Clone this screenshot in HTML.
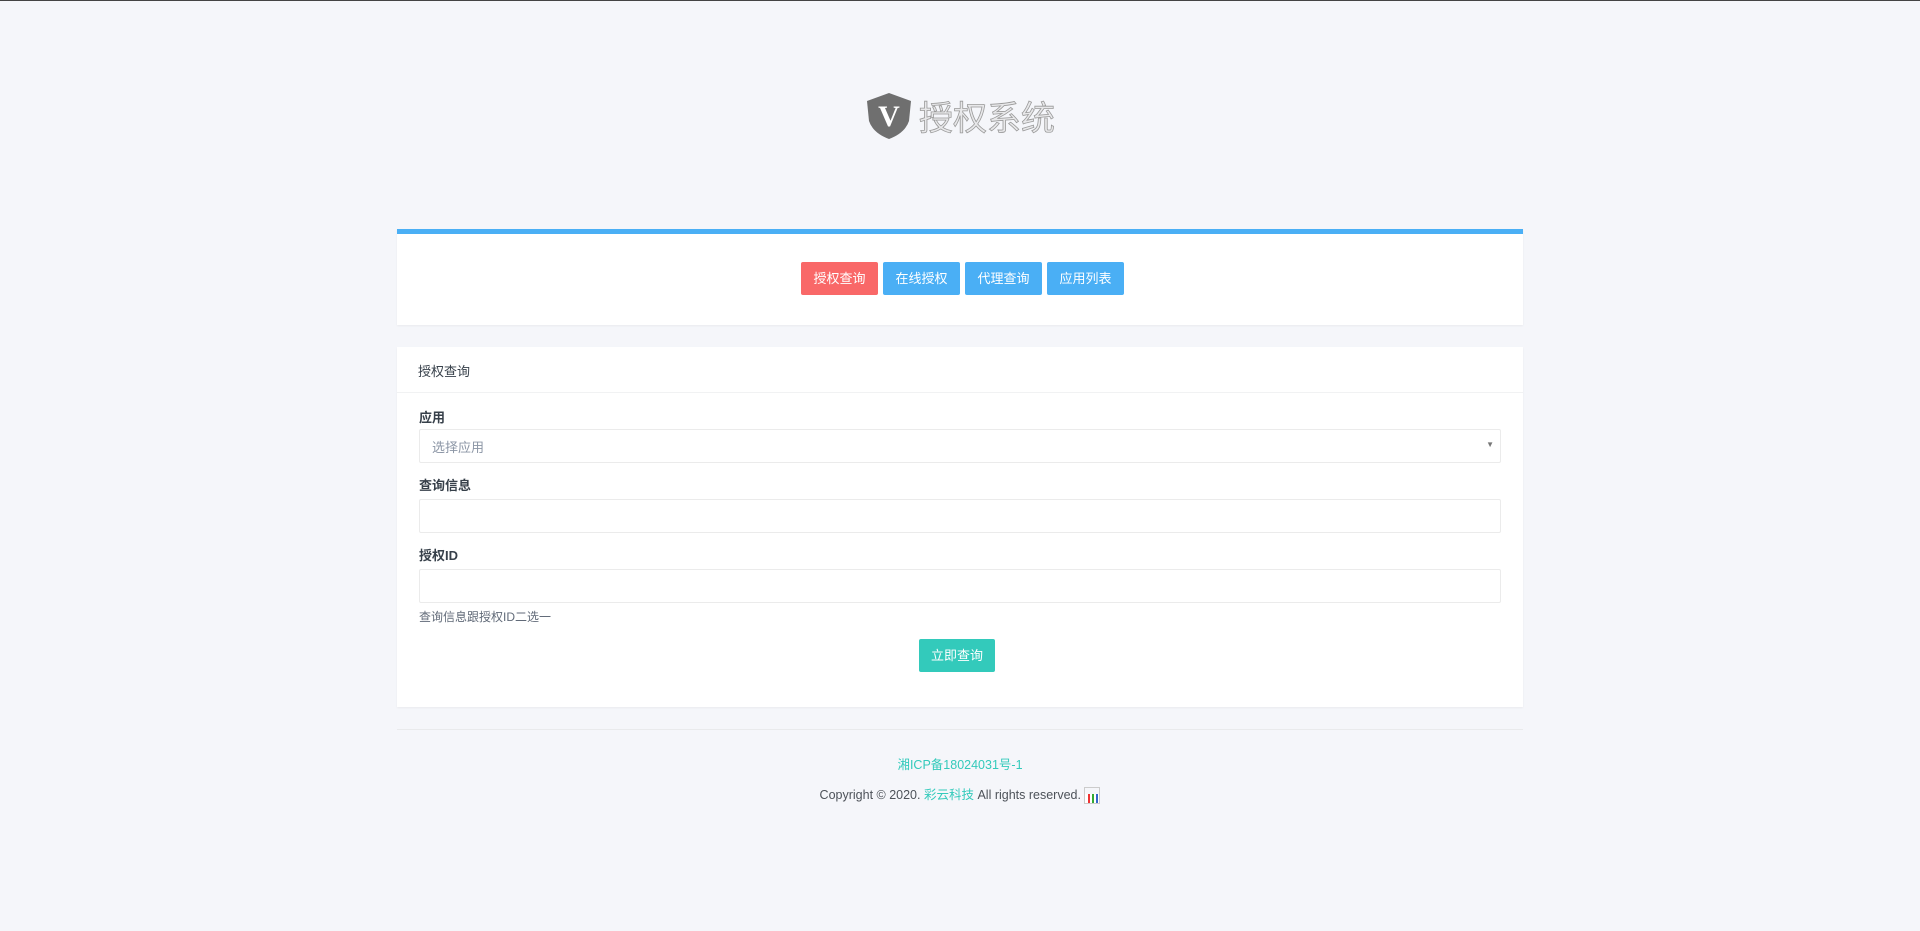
<!DOCTYPE html>
<html><head><meta charset="utf-8"><style>
*{box-sizing:border-box;margin:0;padding:0}
body{width:1920px;height:931px;background:#f5f6fa;font-family:"Liberation Sans","Noto Sans CJK SC",sans-serif;color:#4d5259;border-top:1px solid #444;position:relative;overflow:hidden}
.logo{position:absolute;left:867px;top:90px;display:flex;align-items:center}
.logo span{font-size:34px;color:#e8e8ea;-webkit-text-stroke:0.8px #9a9a9a;margin-left:8px;letter-spacing:0px}
.card{position:absolute;left:397px;width:1126px;background:#fff;box-shadow:0 1px 2px rgba(0,0,0,.05)}
.c1{top:228px;height:96px;border-top:5px solid #4aaff5}
.btns{position:absolute;top:28px;left:404px;display:flex;gap:5px}
.btn{height:33px;width:77px;color:#fff;font-size:13px;line-height:33px;text-align:center;border-radius:2px;background:#4aaff5}
.red{background:#f96868}
.c2{top:346px;height:360px}
.hd{height:46px;border-bottom:1px solid #f1f2f3;padding:14px 21px;font-size:13px;color:#37404a}
label{position:absolute;left:22px;font-size:13px;font-weight:bold;color:#37404a}
.in{position:absolute;left:22px;width:1082px;height:34px;border:1px solid #ebebeb;border-radius:2px;font-size:13px;color:#8b95a5;padding:7px 12px}
.arrow{position:absolute;right:6px;top:10px;font-size:8px;color:#777}
.help{position:absolute;left:22px;top:261px;font-size:12px;color:#616a78}
.go{position:absolute;left:522px;top:292px;width:76px;height:33px;background:#33cabb;color:#fff;font-size:13px;line-height:33px;text-align:center;border-radius:2px}
hr{position:absolute;top:728px;left:397px;width:1126px;border:0;border-top:1px solid #e9eaec}
.ft{position:absolute;left:0;width:1920px;text-align:center;font-size:12.5px;color:#4d5259}
a{color:#33cabb;text-decoration:none}
</style></head><body>
<div class="logo"><svg width="44" height="46" viewBox="0 0 44 46"><path d="M22 0 L44 8 L42 28 Q38 40 22 46 Q6 40 2 28 L0 8 Z" fill="#6f6f6f"/><text x="22" y="33" text-anchor="middle" font-family="Liberation Serif,serif" font-weight="bold" font-size="30" fill="#fff">V</text></svg><span>授权系统</span></div>
<div class="card c1"><div class="btns"><div class="btn red">授权查询</div><div class="btn">在线授权</div><div class="btn">代理查询</div><div class="btn">应用列表</div></div></div>
<div class="card c2">
<div class="hd">授权查询</div>
<label style="top:60px">应用</label>
<div class="in" style="top:82px">选择应用<span class="arrow">▼</span></div>
<label style="top:128px">查询信息</label>
<div class="in" style="top:152px"></div>
<label style="top:198px">授权ID</label>
<div class="in" style="top:222px"></div>
<div class="help">查询信息跟授权ID二选一</div>
<div class="go">立即查询</div>
</div>
<hr>
<div class="ft" style="top:753px"><a>湘ICP备18024031号-1</a></div>
<div class="ft" style="top:783px">Copyright © 2020. <a>彩云科技</a> All rights reserved. <span style="display:inline-block;width:16px;height:17px;border:1px solid #ccc;vertical-align:middle;background:linear-gradient(90deg,#fff 3px,#e33 3px,#e33 5px,#fff 5px,#fff 7px,#3a3 7px,#3a3 9px,#fff 9px,#fff 11px,#36c 11px,#36c 13px,#fff 13px) bottom/100% 9px no-repeat"></span></div>
</body></html>
